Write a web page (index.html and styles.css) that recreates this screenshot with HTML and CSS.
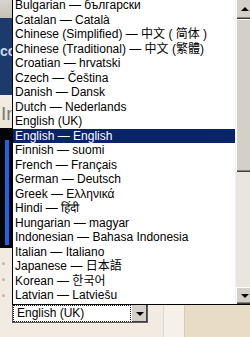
FILE: index.html
```html
<!DOCTYPE html>
<html lang="en">

<head>
    <meta charset="UTF-8" />
    <meta name="viewport" content="width=device-width, initial-scale=1.0" />
    <title>Language</title>
    <link rel="stylesheet" href="styles.css">
</head>

<body>

    <div class="pagina">
        <div class="banda gris"></div>
        <div class="banda azul"><span>co</span></div>
        <div class="banda intro"><span>In</span></div>
        <div class="banda negra"><div class="barra"></div></div>
        <div class="banda baja">
            <div class="col col-form">
                <ul class="puntos">
                    <li></li>
                    <li></li>
                    <li></li>
                </ul>
                <div class="select">
                    <span class="valor">English (UK)</span>
                    <span class="boton"><i class="flecha abajo"></i></span>
                </div>
            </div>
            <div class="col col-media"></div>
            <div class="col col-resto"></div>
        </div>
    </div>

    <!-- lista desplegada del select -->
    <div class="lista">
        <ul class="opciones">
            <li>Bulgarian — български</li>
            <li>Catalan — Català</li>
            <li>Chinese (Simplified) — 中文 ( 简体 )</li>
            <li>Chinese (Traditional) — 中文 (繁體)</li>
            <li>Croatian — hrvatski</li>
            <li>Czech — Čeština</li>
            <li>Danish — Dansk</li>
            <li>Dutch — Nederlands</li>
            <li>English (UK)</li>
            <li class="activo">English — English</li>
            <li>Finnish — suomi</li>
            <li>French — Français</li>
            <li>German — Deutsch</li>
            <li>Greek — Ελληνικά</li>
            <li>Hindi — हिंदी</li>
            <li>Hungarian — magyar</li>
            <li>Indonesian — Bahasa Indonesia</li>
            <li>Italian — Italiano</li>
            <li>Japanese — 日本語</li>
            <li>Korean — 한국어</li>
            <li>Latvian — Latviešu</li>
        </ul>
        <div class="scroll">
            <div class="btn-scroll arriba"><i class="flecha arriba"></i></div>
            <div class="thumb"></div>
            <div class="pista"></div>
            <div class="btn-scroll abajo"><i class="flecha abajo"></i></div>
        </div>
    </div>

</body>

</html>
```

FILE: styles.css
```css
html,
body {
    margin: 0;
    padding: 0;
    width: 250px;
    height: 337px;
    overflow: hidden;
    font-family: 'Liberation Sans', 'Noto Sans CJK SC', sans-serif;
}

.pagina {
    display: flex;
    flex-direction: column;
    height: 337px;
}

.banda {
    overflow: hidden;
}

.gris {
    height: 18px;
    background: linear-gradient(#d9d5cc, #c6c1b6);
}

.azul {
    height: 77px;
    background: #1d3a6c;
    color: #cdd6e6;
    font-size: 14px;
    font-weight: bold;
    padding-top: 25px;
    box-sizing: border-box;
}

.intro {
    height: 33px;
    background: linear-gradient(#f3eee6, #e9e2d6);
    color: #777;
    font-size: 19px;
    padding-top: 8px;
    padding-left: 1px;
    box-sizing: border-box;
}

.negra {
    height: 120px;
    background: #050505;
    padding-top: 12px;
    box-sizing: border-box;
}

.barra {
    width: 4px;
    height: 105px;
    margin-left: 5px;
    background: #1c63ea;
}

.baja {
    flex: 1;
    display: flex;
}

.col-form {
    width: 163px;
    background: #f1ebe2;
}

.col-media {
    width: 20px;
    background: #f5f0e8;
    border-left: 1px solid #e0d7ca;
}

.col-resto {
    flex: 1;
    background: #e8dcc7;
    border-left: 1px solid #d8cbb5;
}

.puntos {
    list-style: none;
    margin: 0;
    padding: 7px 0 0 0;
}

.puntos li {
    height: 16px;
    display: flex;
    align-items: center;
}

.puntos li::before {
    content: "";
    width: 3px;
    height: 3px;
    margin-left: 2px;
    border-radius: 50%;
    background: #c7b5b0;
}

.select {
    display: flex;
    width: 136px;
    height: 19px;
    margin: 1px 0 0 12px;
    box-sizing: border-box;
    background: #fff;
    border: 1px solid #5c5c5c;
    border-top-color: #3a3a3a;
}

.valor {
    flex: 1;
    font-size: 12px;
    line-height: 15px;
    padding-left: 3px;
    border: 1px dotted #222;
    color: #000;
}

.boton {
    width: 15px;
    display: flex;
    align-items: center;
    justify-content: center;
    background: #d4d0c8;
    border-left: 1px solid #fff;
    box-shadow: inset -1px -1px 0 #404040;
}

.flecha {
    width: 0;
    height: 0;
    border-left: 4px solid transparent;
    border-right: 4px solid transparent;
}

.flecha.abajo {
    border-top: 4px solid #000;
}

.flecha.arriba {
    border-bottom: 4px solid #000;
}

/* lista desplegada */
.lista {
    position: absolute;
    top: -3px;
    left: 12px;
    width: 242px;
    height: 308px;
    box-sizing: border-box;
    display: flex;
    background: #fff;
    border: 1px solid #000;
}

.opciones {
    list-style: none;
    margin: 0;
    padding: 0;
    width: 223px;
    font-size: 12px;
    line-height: 14.5px;
    color: #000;
}

.opciones li {
    padding-left: 2px;
    white-space: nowrap;
}

.opciones li.activo {
    background: #0a246a;
    color: #fff;
}

.scroll {
    width: 17px;
    display: flex;
    flex-direction: column;
    border-left: 1px solid #f2f0ec;
}

.btn-scroll {
    display: flex;
    align-items: center;
    justify-content: center;
    background: #d4d0c8;
    box-shadow: inset 1px 1px 0 #fff, inset -1px -1px 0 #404040, inset -2px -2px 0 #808080;
}

.btn-scroll.arriba {
    height: 21px;
}

.btn-scroll.abajo {
    height: 17px;
}

.thumb {
    height: 153px;
    background: #d4d0c8;
    box-shadow: inset 1px 1px 0 #fff, inset -1px -1px 0 #404040, inset -2px -2px 0 #808080;
}

.pista {
    flex: 1;
    background: #e9e6e0;
}
```
